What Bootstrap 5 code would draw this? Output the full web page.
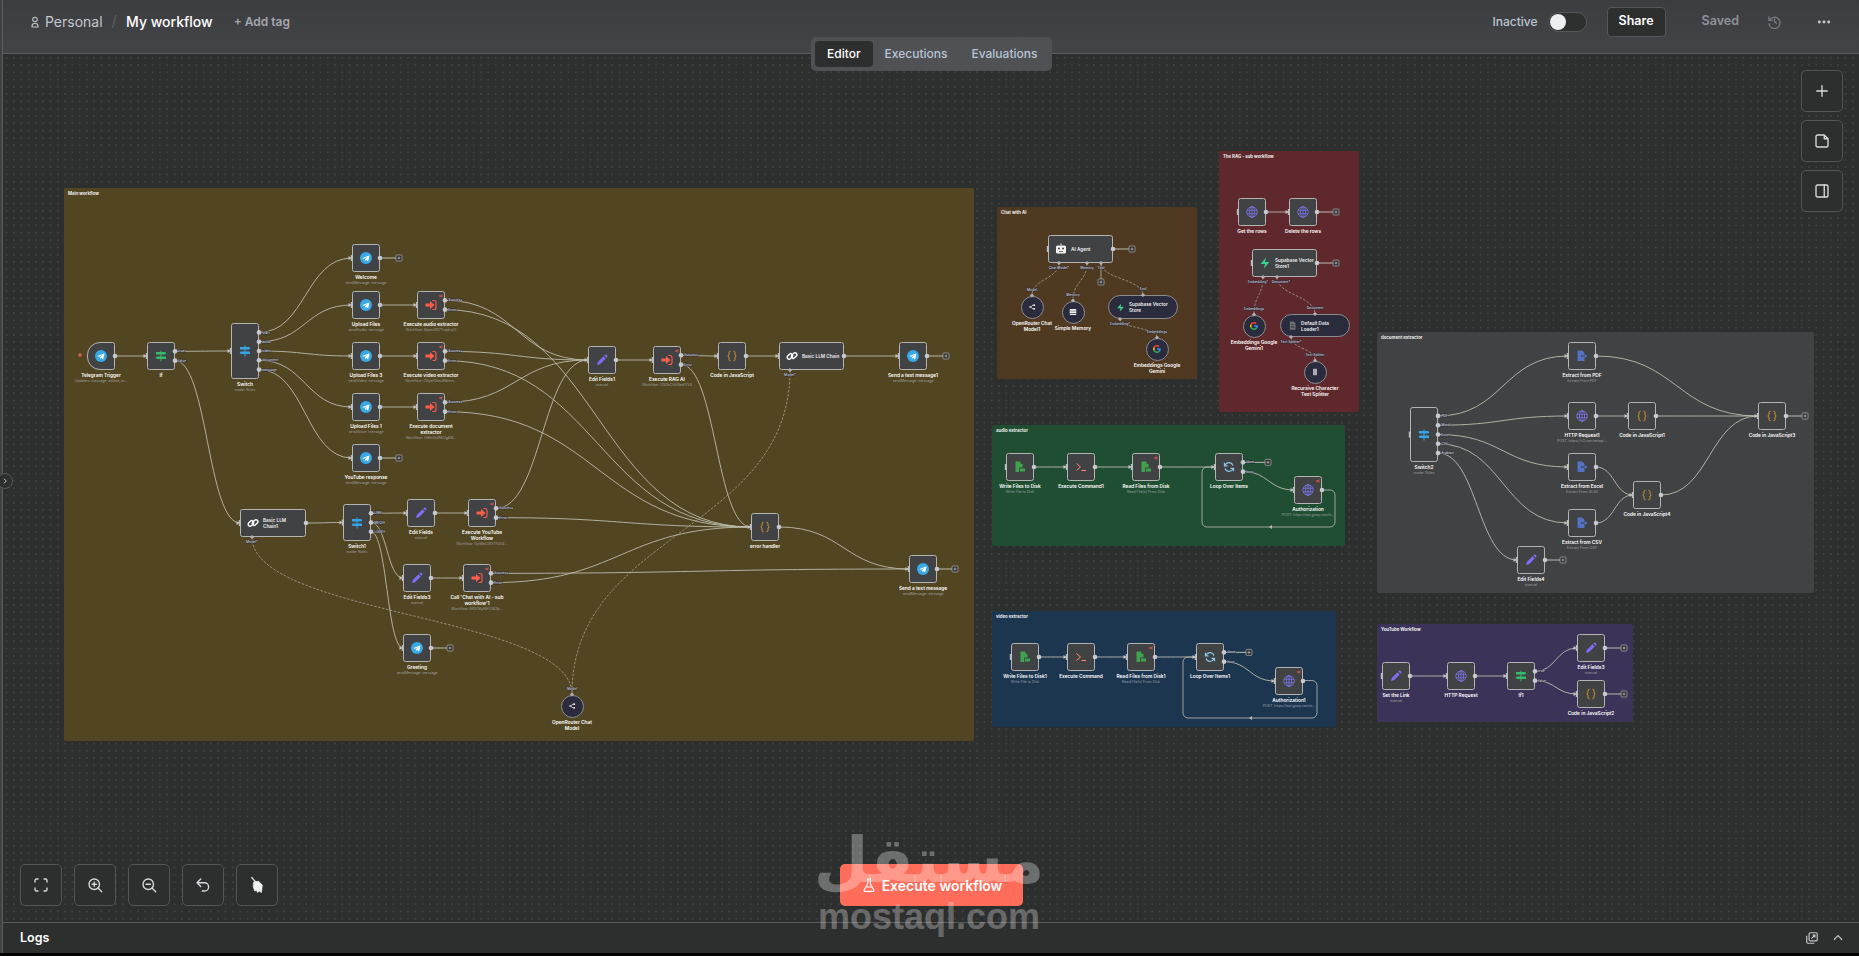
<!doctype html>
<html lang="en">
<head>
<meta charset="utf-8">
<title>My workflow</title>
<link href="https://cdn.jsdelivr.net/npm/bootstrap@5.3.0/dist/css/bootstrap.min.css" rel="stylesheet">
<style>
html,body{height:100%;margin:0;overflow:hidden}
body{background:#000;font-family:Inter,"Liberation Sans",sans-serif;color:#fff}
.app-shell{height:953px}
.side-rail{width:3px;background:#414244;border-right:1px solid #5d5e60}
.top-bar{height:54px;background:linear-gradient(180deg,#3c3d40,#434447);border-bottom:1px solid #5c5d5f;padding:0 27px 10px 26px}
.crumb-muted{font-size:14px;color:#c4c7cd}
.crumb-sep{color:#5f6064;font-size:15px;margin:0 9px}
.crumb-title{font-size:14px;font-weight:500;color:#fff}
.add-tag{font-size:12px;font-weight:600;color:#a4a7af;margin-left:21px}
.state-text{font-size:12px;font-weight:500;color:#bcc4d0}
.toggle-track{width:39px;height:20px;background:#2e2f2f;border:1px solid #57585a;border-radius:10px;margin-left:10px;display:flex;align-items:center;padding-left:1px}
.toggle-knob{width:16px;height:16px;border-radius:50%;background:#eceef2}
.share-btn{width:59px;height:30px;background:#2d2e2e;border:1px solid #55565a;border-radius:4px;font-size:12.5px;font-weight:600;color:#fff;margin-left:20px;padding:0}
.saved-text{font-size:12.5px;font-weight:600;color:#8f939b;margin-left:36px}
.hist-icon{margin-left:28px}
.more-icon{margin-left:34px}
.flow-canvas{background-color:#2d2e2e;background-image:radial-gradient(circle,#484949 .6px,transparent .72px);background-size:7.3px 7.3px;overflow:hidden}
.tab-strip{left:808px;top:37px;height:34px;width:241px;background:#505154;border-radius:5px;padding:4px;z-index:5}
.tab-item{font-size:12px;font-weight:500;color:#b9c4d6;padding:0 12px;line-height:26px;border-radius:4px}
.tab-item.is-on{background:#2d2e2e;color:#fff}
.tool-btn{width:42px;height:42px;background:#2d2e2e;border:1px solid #545557;border-radius:5px;padding:0;display:flex;align-items:center;justify-content:center}
.tool-btn svg{width:18px;height:18px;fill:none;stroke:#d8d9dc;stroke-width:1.8;stroke-linecap:round;stroke-linejoin:round}
.side-tools{right:16px;top:16px;gap:8px;z-index:4}
.zoom-tools{left:17px;bottom:16px;gap:12px;z-index:4}
.run-btn{left:837px;bottom:16px;width:183px;height:42px;background:#ff6d5a;border:0;border-radius:5px;color:#fff;font-size:14px;font-weight:600;gap:5px;z-index:4;padding:0}
.run-btn svg{width:16px;height:16px;fill:none;stroke:#fff;stroke-width:1.7;stroke-linejoin:round}
.log-bar{height:31px;background:#2d2e2e;border-top:1px solid #58595b;padding:0 14px 0 17px;font-size:12.5px;font-weight:600}
.log-gap{margin-left:12px}
.rail-knob{left:-3px;top:473px;width:16px;height:16px;border-radius:50%;background:#2d2e2e;border:1px solid #58595b;z-index:6}
.stamp{position:absolute;left:807px;top:823px;width:244px;text-align:center;z-index:9;color:rgba(255,255,255,.3);pointer-events:none}
.stamp-ar{font-family:"DejaVu Sans",sans-serif;font-weight:700;font-size:63px;line-height:76px;height:76px}
.stamp-en{font-family:"Liberation Sans",sans-serif;font-weight:700;font-size:36px;line-height:36px}
.flow-group{position:absolute;border-radius:2px}
.group-title{position:absolute;left:4px;top:2.5px;font-size:4.3px;font-weight:700;line-height:6px;color:#eee;white-space:nowrap}
.flow-node{position:absolute;background:#414244;border:1px solid #b4b4b4;border-radius:2.5px;display:flex;align-items:center;justify-content:center;gap:4px}
.flow-node svg{flex:none}
.flow-node.is-wide{justify-content:flex-start;padding-left:6px}
.flow-node.is-round{background:#2a2c3d;border-radius:50%;border-color:#8d8d90}
.flow-node.is-pill{background:#2a2c3d;border-radius:13px;justify-content:flex-start;padding-left:7px;border-color:#8d8d90}
.flow-node.is-trigger{border-radius:13px 2.5px 2.5px 13px}
.node-inner{font-size:4.7px;font-weight:600;line-height:6px;color:#f0f0f0;max-width:39px}
.node-cap{position:absolute;width:56px;text-align:center;font-size:4.8px;font-weight:600;line-height:6.2px;color:#fff}
.node-cap.is-narrow{width:50px}
.node-sub{display:flex;justify-content:center;width:100%;font-size:3.6px;font-weight:400;line-height:7.5px;color:#9fa0a0;white-space:nowrap}
.wire-layer{position:absolute;left:0;top:0;pointer-events:none;overflow:visible}
.port-text{font-size:3.4px;font-weight:500;fill:#cfd0d4;paint-order:stroke;stroke:rgba(40,42,60,.75);stroke-width:1px}
.ext-mark{position:absolute;right:1.5px;top:1.5px;width:4px;height:4px}
</style>
</head>
<body>
<svg width="0" height="0" class="position-absolute">
<defs>
<symbol id="i-tg" viewBox="0 0 24 24"><circle cx="12" cy="12" r="12" fill="#37a9e6"/><path fill="#fff" d="M5 12l13-5c.7-.2 1 .1.8 1l-2.200 10c-.1.7-.6.8-1.100.5l-3.400-2.500-1.600 1.500c-.3.300-.8.200-.8-.2l.2-3 5.500-5-7 4.300-3.200-1c-.6-.2-.7-.4-.2-.6z"/></symbol>
<symbol id="i-if" viewBox="0 0 24 24"><path fill="#35b96c" d="M11 1h2v22h-2z"/><path fill="#35b96c" d="M2 4h18l3 2.500-3 2.500H2zM4 13h18v5H4l-3-2.500z"/></symbol>
<symbol id="i-sw" viewBox="0 0 24 24"><path fill="#35a5e8" d="M11 1h2v22h-2z"/><path fill="#35a5e8" d="M2 4h18l3 2.500-3 2.500H2zM4 13h18v5H4l-3-2.500z"/></symbol>
<symbol id="i-ex" viewBox="0 0 24 24"><path fill="#ff5c4a" d="M1 9h9V4l9 8-9 8v-5H1z"/><path fill="none" stroke="#ff5c4a" stroke-width="2.200" d="M15 3h3a4 4 0 0 1 4 4v10a4 4 0 0 1-4 4h-3"/></symbol>
<symbol id="i-pen" viewBox="0 0 24 24"><path fill="#7e6cf2" d="M2 22l1.500-6L15 4.500 19.500 9 8 20.500zM16.500 3l1.500-1.500a2 2 0 0 1 2.800 0l1.700 1.700a2 2 0 0 1 0 2.800L21 7.500z"/></symbol>
<symbol id="i-code" viewBox="0 0 24 24"><path fill="none" stroke="#e59c28" stroke-width="2" d="M9 2.500C6 2.500 6 4.500 6 6.500v2.500c0 2-2.500 3-2.500 3S6 13 6 15v2.500c0 2 0 4 3 4M15 2.500c3 0 3 2 3 4v2.500c0 2 2.500 3 2.500 3S18 13 18 15v2.500c0 2 0 4-3 4"/></symbol>
<symbol id="i-link" viewBox="0 0 24 24"><g fill="none" stroke="#fff" stroke-width="2.800"><rect x="1.500" y="9" width="12.500" height="7.500" rx="3.700" transform="rotate(-45 8 12.800)"/><rect x="10" y="7.500" width="12.500" height="7.500" rx="3.700" transform="rotate(-45 16 11.200)"/></g></symbol>
<symbol id="i-web" viewBox="0 0 24 24"><g fill="none" stroke="#7f78f2" stroke-width="1.500"><circle cx="12" cy="12" r="10.500"/><ellipse cx="12" cy="12" rx="5" ry="10.500"/><path d="M2 8.500h20M2 15.500h20M12 1.500v21"/></g></symbol>
<symbol id="i-file" viewBox="0 0 24 24"><path fill="#3ea34c" d="M3 1h9l5 5.500V13h-7v9H3z"/><path fill="#3ea34c" d="M11.500 15h10.500v6H11.500z"/><path fill="#414244" d="M13 1.500l4 4h-4z"/></symbol>
<symbol id="i-term" viewBox="0 0 24 24"><path fill="none" stroke="#ff8a75" stroke-width="2" d="M3 5l8 7-8 7M13 19h9"/></symbol>
<symbol id="i-loop" viewBox="0 0 24 24"><path fill="none" stroke="#8ec7ea" stroke-width="2.500" d="M20 9A8.500 8.500 0 0 0 5 7L3 9.500M3 3.500v6h6M4 15a8.500 8.500 0 0 0 15 2l2-2.500M21 20.500v-6h-6"/></symbol>
<symbol id="i-pdf" viewBox="0 0 24 24"><path fill="#5572c4" d="M3 1h9l5 5.500V10h-7v4h7v8H3zM13 1.500l4 4h-4z"/><path fill="#5572c4" d="M11 11h7V8.500l5 3.500-5 3.500V13h-7z"/></symbol>
<symbol id="i-bot" viewBox="0 0 24 24"><path fill="#f3f3f3" d="M11 1h2v3h-2zM5 5h14a3 3 0 0 1 3 3v10a3 3 0 0 1-3 3H5a3 3 0 0 1-3-3V8a3 3 0 0 1 3-3z"/><circle cx="8" cy="11" r="2" fill="#414244"/><circle cx="16" cy="11" r="2" fill="#414244"/><path fill="#414244" d="M8 16h8v1.500H8z"/></symbol>
<symbol id="i-or" viewBox="0 0 24 24"><path fill="none" stroke="#fff" stroke-width="2.600" d="M3 12h4c4 0 4-5.500 9-5.500M7 12c4 0 4 5.500 9 5.500"/><circle cx="18.500" cy="6.500" r="2.800" fill="#fff"/><circle cx="18.500" cy="17.500" r="2.800" fill="#fff"/></symbol>
<symbol id="i-db" viewBox="0 0 24 24"><path fill="#f0f0f0" d="M4 3h16a2 2 0 0 1 2 2v3H2V5a2 2 0 0 1 2-2zM2 10h20v5H2zM2 17h20v2a2 2 0 0 1-2 2H4a2 2 0 0 1-2-2z"/></symbol>
<symbol id="i-bolt" viewBox="0 0 24 24"><path fill="#3ecf8e" d="M14 1L3 14h9l-2 9 11-13h-9z"/></symbol>
<symbol id="i-g" viewBox="0 0 48 48"><path fill="#EA4335" d="M24 9.500c3.500 0 6.700 1.200 9.200 3.600l6.900-6.900C35.900 2.400 30.500 0 24 0 14.600 0 6.500 5.400 2.600 13.200l8 6.200C12.400 13.700 17.700 9.500 24 9.500z"/><path fill="#4285F4" d="M47 24.500c0-1.600-.1-3.100-.4-4.500H24v9h12.900c-.6 3-2.200 5.500-4.800 7.200l7.700 6c4.500-4.200 7.200-10.300 7.200-17.700z"/><path fill="#FBBC05" d="M10.600 28.600c-.5-1.400-.8-3-.8-4.600s.3-3.200.8-4.600l-8-6.200C.9 16.500 0 20.100 0 24s.9 7.500 2.600 10.800z"/><path fill="#34A853" d="M24 48c6.500 0 11.900-2.100 15.900-5.800l-7.700-6c-2.200 1.500-5 2.300-8.200 2.300-6.300 0-11.600-4.200-13.500-9.900l-8 6.200C6.500 42.600 14.600 48 24 48z"/></symbol>
<symbol id="i-load" viewBox="0 0 24 24"><path fill="#6c6e72" d="M5 1h10l5 5v17H5z"/><path fill="#2a2c3d" d="M8 9h9v1.500H8zM8 13h9v1.500H8zM8 17h9v1.500H8z"/></symbol>
<symbol id="i-split" viewBox="0 0 24 24"><path fill="#e8e8ec" d="M7 2h4v20H7zM13 2h4v20h-4z"/></symbol>
</defs>
</svg>

<div class="app-shell d-flex position-relative">
  <div class="side-rail flex-shrink-0"></div>
  <main class="flex-grow-1 d-flex flex-column position-relative">
    <header class="top-bar d-flex align-items-center flex-shrink-0">
      <svg width="12" height="12" viewBox="0 0 24 24" fill="none" stroke="#c4c7cd" stroke-width="2.200" class="me-1"><circle cx="12" cy="7" r="4.500"/><path d="M6 22v-2a5 5 0 0 1 5-5h2a5 5 0 0 1 5 5v2z"/></svg>
      <span class="crumb-muted">Personal</span><span class="crumb-sep">/</span><span class="crumb-title">My workflow</span><span class="add-tag">+ Add tag</span>
      <div class="ms-auto d-flex align-items-center">
        <span class="state-text">Inactive</span>
        <span class="toggle-track"><span class="toggle-knob"></span></span>
        <button class="btn share-btn" type="button">Share</button>
        <span class="saved-text">Saved</span>
        <svg width="15" height="15" viewBox="0 0 24 24" fill="none" stroke="#777a80" stroke-width="2" class="hist-icon"><path d="M3 4v6h6M4 10a9 9 0 1 1-1 5M12 7v6l4 2"/></svg>
        <svg width="16" height="16" viewBox="0 0 24 24" fill="#c8cace" class="more-icon"><circle cx="5" cy="12" r="2.200"/><circle cx="12" cy="12" r="2.200"/><circle cx="19" cy="12" r="2.200"/></svg>
      </div>
    </header>
    <div class="flow-canvas flex-grow-1 position-relative" id="canvas">
      <div class="position-absolute d-flex flex-column side-tools">
        <button class="btn tool-btn" type="button"><svg viewBox="0 0 24 24"><path d="M12 5v14M5 12h14"/></svg></button>
        <button class="btn tool-btn" type="button"><svg viewBox="0 0 24 24"><path d="M6 4h9l5 5v9a2 2 0 0 1-2 2H6a2 2 0 0 1-2-2V6a2 2 0 0 1 2-2zM15 4v5h5"/></svg></button>
        <button class="btn tool-btn" type="button"><svg viewBox="0 0 24 24"><rect x="4" y="4" width="16" height="16" rx="2"/><path d="M15 4v16"/></svg></button>
      </div>
      <div class="position-absolute d-flex zoom-tools">
        <button class="btn tool-btn" type="button"><svg viewBox="0 0 24 24"><path d="M4 8V6a2 2 0 0 1 2-2h2M16 4h2a2 2 0 0 1 2 2v2M20 16v2a2 2 0 0 1-2 2h-2M8 20H6a2 2 0 0 1-2-2v-2"/></svg></button>
        <button class="btn tool-btn" type="button"><svg viewBox="0 0 24 24"><circle cx="11" cy="11" r="7"/><path d="M21 21l-5-5M11 8v6M8 11h6"/></svg></button>
        <button class="btn tool-btn" type="button"><svg viewBox="0 0 24 24"><circle cx="11" cy="11" r="7"/><path d="M21 21l-5-5M8 11h6"/></svg></button>
        <button class="btn tool-btn" type="button"><svg viewBox="0 0 24 24"><path d="M9 14L4 9l5-5M4 9h10a5.500 5.500 0 0 1 0 11h-3"/></svg></button>
        <button class="btn tool-btn" type="button"><svg viewBox="0 0 24 24"><path d="M5 2l6 7"/><path fill="#f2f2f2" stroke="#f2f2f2" stroke-width="1" d="M8 8l6-1 5 5-1 10-3-2-2 2-2-3-2 1-2-6z"/></svg></button>
      </div>
      <button class="btn position-absolute d-flex align-items-center justify-content-center run-btn" type="button"><svg viewBox="0 0 24 24"><path d="M9 3h6M10 3v7L4.500 20a1 1 0 0 0 1 1.500h13a1 1 0 0 0 1-1.500L14 10V3M7.500 15h9"/></svg>Execute workflow</button>
    </div>
    <footer class="log-bar d-flex align-items-center flex-shrink-0">
      <span>Logs</span>
      <svg width="14" height="14" viewBox="0 0 24 24" fill="none" stroke="#c4c6cb" stroke-width="2" class="ms-auto"><rect x="7" y="3" width="14" height="14" rx="2"/><path d="M3 8v11a2 2 0 0 0 2 2h11M11 13l6-6M13 7h4v4"/></svg>
      <svg width="14" height="14" viewBox="0 0 24 24" fill="none" stroke="#c4c6cb" stroke-width="2" class="log-gap"><path d="M5 15l7-7 7 7"/></svg>
    </footer>
    <div class="position-absolute d-flex tab-strip">
      <span class="tab-item is-on">Editor</span><span class="tab-item">Executions</span><span class="tab-item">Evaluations</span>
    </div>
  </main>
  <div class="position-absolute rail-knob d-flex align-items-center justify-content-center">
    <svg width="8" height="8" viewBox="0 0 24 24" fill="none" stroke="#c4c6cb" stroke-width="3"><path d="M9 5l7 7-7 7"/></svg>
  </div>
  <div class="stamp"><div class="stamp-ar" lang="ar" dir="rtl">مستقل</div><div class="stamp-en">mostaql.com</div></div>
</div>

<script src="https://cdn.jsdelivr.net/npm/bootstrap@5.3.0/dist/js/bootstrap.bundle.min.js"></script>
<script>
const OX=3,OY=54,canvas=document.getElementById('canvas'),NS='http://www.w3.org/2000/svg';
const groups=[
 ['Main workflow',64,188,910,553,'#524521'],
 ['Chat with AI',997,207,200,172,'#4f3a21'],
 ['The RAG - sub workflow',1219,151,140,261,'#5f282c'],
 ['audio extractor',992,425,353,121,'#1f4e33'],
 ['video extractor',992,611,344,116,'#1d3650'],
 ['document extractor',1377,332,437,261,'#414244'],
 ['YouTube Workflow',1377,624,256,98,'#3c3358']];
const N={};
function n(id,ic,x,y,label,sub,o){N[id]=Object.assign({id,ic,x,y,w:28,h:28,label,sub,outs:1},o||{});}
const msg='sendMessage: message';
n('trig','tg',87,342,'Telegram Trigger','Updates: message, edited_m...',{trigger:1});
n('if','if',147,342,'If','',{outs:2});
n('sw','sw',231,323,'Switch','mode: Rules',{h:56,outs:5,ol:['start','audio','video','document','message']});
n('wel','tg',352,244,'Welcome',msg);
n('up','tg',352,291,'Upload Files','sendAudio: message');
n('up3','tg',352,342,'Upload Files 3','sendVideo: message');
n('up1','tg',352,393,'Upload Files 1','sendVoice: message');
n('yt','tg',352,444,'YouTube response',msg);
const S=['Success','Error'];
n('exA','ex',417,291,'Execute audio extractor','Workflow: 8qonrRD7TvqdryI3',{outs:2,ol:S,ext:1});
n('exV','ex',417,342,'Execute video extractor','Workflow: O0yeiOSauRBnnn...',{outs:2,ol:S,ext:1});
n('exD','ex',417,393,'Execute document extractor','Workflow: O8ks7qSMClgBN...',{outs:2,ol:S,ext:1});
n('ef1','pen',588,346,'Edit Fields1','manual');
n('rag','ex',653,346,'Execute RAG AI','Workflow: O0ZbCHU8edlYV8',{outs:2,ol:S,ext:1});
n('js','code',718,342,'Code in JavaScript','');
n('llm','link',779,342,'Basic LLM Chain','',{w:65,wide:1,bp:[[11,'Model*']]});
n('send1','tg',899,342,'Send a text message1',msg);
n('err','code',751,513,'error handler','');
n('send','tg',909,555,'Send a text message',msg);
n('llm1','link',240,509,'Basic LLM Chain1','',{w:66,wide:1,bp:[[12,'Model*']]});
n('sw1','sw',343,504,'Switch1','mode: Rules',{h:37,outs:3,ol:['LINK','MEDIA','LOBBY']});
n('ef','pen',407,499,'Edit Fields','manual');
n('exY','ex',468,499,'Execute YouTube Workflow','Workflow: DyMeLDE5T7Uh2...',{outs:2,ol:S,ext:1});
n('ef3','pen',403,564,'Edit Fields3','manual');
n('call','ex',463,564,"Call 'Chat with AI - sub workflow'1",'Workflow: 8R2GKyNAY3B2b...',{outs:2,ol:S,ext:1});
n('greet','tg',403,634,'Greeting',msg);
n('or','or',560.500,694.500,'OpenRouter Chat Model','',{w:23,h:23,round:1,tl:'Model'});
n('ai','bot',1048,235,'AI Agent','',{w:65,wide:1,bp:[[11,'Chat Model*'],[39,'Memory'],[53,'Tool']]});
n('or1','or',1020.500,295.500,'OpenRouter Chat Model1','',{w:23,h:23,round:1,tl:'Model'});
n('mem','db',1061.500,300.500,'Simple Memory','',{w:23,h:23,round:1,tl:'Memory'});
n('sup','bolt',1108,295,'Supabase Vector Store','',{w:70,h:24,pill:1,tl:'Tool',tlx:35,bp:[[12,'Embedding*']]});
n('emb','g',1145.500,337.500,'Embeddings Google Gemini','',{w:23,h:23,round:1,tl:'Embeddings'});
n('get','web',1238,198,'Get the rows','');
n('del','web',1289,198,'Delete the rows','');
n('sup1','bolt',1252,249,'Supabase Vector Store1','',{w:65,wide:1,bp:[[11,'Embedding*',-5],[25,'Document*',4]]});
n('emb1','g',1242.500,314.500,'Embeddings Google Gemini1','',{w:23,h:23,round:1,tl:'Embeddings'});
n('dl','load',1280,314,'Default Data Loader1','',{w:70,h:23,pill:1,tl:'Document',tlx:35,bp:[[11,'Text Splitter*']]});
n('rec','split',1303.500,360.500,'Recursive Character Text Splitter','',{w:23,h:23,round:1,tl:'Text Splitter'});
const wf='Write File to Disk',rf='Read File(s) From Disk',gq='POST: https://api.groq.com/o...';
n('w1','file',1006,453,'Write Files to Disk',wf);
n('c1','term',1067,453,'Execute Command1','');
n('r1','file',1132,453,'Read Files from Disk',rf,{ext:1});
n('l1','loop',1215,453,'Loop Over Items','',{outs:2,ol:['done','loop']});
n('a1','web',1294,476,'Authorization',gq,{ext:1});
n('w2','file',1011,643,'Write Files to Disk1',wf);
n('c2','term',1067,643,'Execute Command','');
n('r2','file',1127,643,'Read Files from Disk1',rf,{ext:1});
n('l2','loop',1196,643,'Loop Over Items1','',{outs:2,ol:['done','loop']});
n('a2','web',1275,667,'Authorization1',gq,{ext:1});
n('sw2','sw',1410,407,'Switch2','mode: Rules',{h:55,outs:5,ol:['PDF','Word','Excel','CSV','Arabian']});
n('pdf','pdf',1568,342,'Extract from PDF','Extract From PDF');
n('h1','web',1568,402,'HTTP Request1','POST: https://v2.convertapi...');
n('j1','code',1628,402,'Code in JavaScript1','');
n('j3','code',1758,402,'Code in JavaScript3','');
n('xl','pdf',1568,453,'Extract from Excel','Extract From XLSX');
n('csv','pdf',1568,509,'Extract from CSV','Extract From CSV');
n('j4','code',1633,481,'Code in JavaScript4','');
n('ef4','pen',1517,546,'Edit Fields4','manual');
n('set','pen',1382,662,'Set the Link','manual');
n('h2','web',1447,662,'HTTP Request','');
n('if1','if',1507,662,'If1','',{outs:2,ol:['true','false']});
n('ef5','pen',1577,634,'Edit Fields3','manual');
n('j2','code',1577,680,'Code in JavaScript2','');
N.if.ol=['true','false'];

function el(tag,cls,txt){const e=document.createElement(tag);if(cls)e.className=cls;if(txt!=null)e.textContent=txt;return e;}
function box(e,x,y,w,h){e.style.left=(x-OX)+'px';e.style.top=(y-OY)+'px';if(w!=null)e.style.width=w+'px';if(h!=null)e.style.height=h+'px';}
function icon(name,s){const v=document.createElementNS(NS,'svg');v.setAttribute('width',s);v.setAttribute('height',s);const u=document.createElementNS(NS,'use');u.setAttribute('href','#i-'+name);v.appendChild(u);return v;}
groups.forEach(g=>{const d=el('div','flow-group');box(d,g[1],g[2],g[3],g[4]);d.style.background=g[5];d.appendChild(el('div','group-title',g[0]));canvas.appendChild(d);});
Object.values(N).forEach(o=>{
  const d=el('div','flow-node'+(o.wide?' is-wide':'')+(o.round?' is-round':'')+(o.pill?' is-pill':'')+(o.trigger?' is-trigger':''));
  box(d,o.x,o.y,o.w,o.h);
  const sz=o.round?8:o.pill?9:12;
  d.appendChild(icon(o.ic,sz));
  if(o.wide||o.pill){d.appendChild(el('span','node-inner',o.label));}
  if(o.ext){const m=icon('ex',4);m.setAttribute('class','ext-mark');d.appendChild(m);}
  canvas.appendChild(d);
  if(!o.wide&&!o.pill){
    const c=el('div','node-cap'+(o.round?' is-narrow':''));c.appendChild(document.createTextNode(o.label));
    if(o.sub)c.appendChild(el('span','node-sub',o.sub));
    box(c,o.x+o.w/2-(o.round?25:28),o.y+o.h+1.500);
    canvas.appendChild(c);
  }
});
function outP(o,i){return [o.x+o.w,o.y+o.h/2+(i-(o.outs-1)/2)*9.300];}
function inP(o){return [o.x,o.y+o.h/2];}
const svg=document.createElementNS(NS,'svg');svg.setAttribute('class','wire-layer');svg.setAttribute('width',1856);svg.setAttribute('height',900);svg.setAttribute('viewBox',OX+' '+OY+' 1856 900');
function add(t,a,txt){const e=document.createElementNS(NS,t);for(const k in a)e.setAttribute(k,a[k]);if(txt)e.textContent=txt;svg.appendChild(e);return e;}
const W='#bcbbae',hasIn=new Set(['l1','l2']);
function wire(a,i,b){hasIn.add(b);const p=outP(N[a],i),q=inP(N[b]);const dx=Math.max((q[0]-p[0])/2,8);
  add('path',{d:`M${p} C${p[0]+dx} ${p[1]},${q[0]-dx} ${q[1]},${q}`,fill:'none',stroke:W,'stroke-width':.9});}
function dash(x1,y1,x2,y2){const c=Math.abs(y2-y1)/2;add('path',{d:`M${x1} ${y1} C${x1} ${y1+c},${x2} ${y2-c},${x2} ${y2}`,fill:'none',stroke:'#b2b2a6','stroke-width':.7,'stroke-dasharray':'2.500 1.500'});}
function stub(a,i,x){const p=outP(N[a],i);add('path',{d:`M${p} H${x-3}`,stroke:W,'stroke-width':1,fill:'none'});
  add('rect',{x:x-3,y:p[1]-3,width:6,height:6,rx:1,fill:'#2f3034',stroke:'#b0b0b0','stroke-width':.7});
  add('path',{d:`M${x-1.500} ${p[1]}h3M${x} ${p[1]-1.500}v3`,stroke:'#ddd','stroke-width':.6});}
[['trig',0,'if'],['if',0,'sw'],['if',1,'llm1'],['sw',0,'wel'],['sw',1,'up'],['sw',2,'up3'],['sw',3,'up1'],['sw',4,'yt'],
 ['up',0,'exA'],['up3',0,'exV'],['up1',0,'exD'],['exA',0,'ef1'],['exA',1,'err'],['exV',0,'ef1'],['exV',1,'err'],['exD',0,'ef1'],['exD',1,'err'],
 ['exY',0,'ef1'],['exY',1,'err'],['call',0,'send'],['call',1,'err'],['ef1',0,'rag'],['rag',0,'js'],['rag',1,'err'],['js',0,'llm'],['llm',0,'send1'],['err',0,'send'],
 ['llm1',0,'sw1'],['sw1',0,'ef'],['sw1',1,'ef3'],['sw1',2,'greet'],['ef',0,'exY'],['ef3',0,'call'],
 ['get',0,'del'],['w1',0,'c1'],['c1',0,'r1'],['r1',0,'l1'],['l1',1,'a1'],['w2',0,'c2'],['c2',0,'r2'],['r2',0,'l2'],['l2',1,'a2'],
 ['sw2',0,'pdf'],['sw2',1,'h1'],['sw2',2,'xl'],['sw2',3,'csv'],['sw2',4,'ef4'],['pdf',0,'j3'],['h1',0,'j1'],['j1',0,'j3'],['xl',0,'j4'],['csv',0,'j4'],['j4',0,'j3'],
 ['set',0,'h2'],['h2',0,'if1'],['if1',0,'ef5'],['if1',1,'j2']].forEach(e=>wire(e[0],e[1],e[2]));
[['wel',0,399],['yt',0,399],['send1',0,946],['send',0,955],['greet',0,450],['ai',0,1132],['del',0,1336],['sup1',0,1336],['l1',0,1268],['l2',0,1249],['ef4',0,1563],['j3',0,1805],['ef5',0,1624],['j2',0,1624]].forEach(s=>stub(s[0],s[1],s[2]));
dash(252,537,572,694);dash(790,370,572,694);
dash(1059,263,1032,295);dash(1087,263,1073,300);dash(1101,263,1143,295);dash(1120,319,1157,337);
dash(1263,277,1254,314);dash(1277,277,1315,314);dash(1291,337,1315,360);
add('path',{d:'M1101 263V279',stroke:W,'stroke-width':.8,fill:'none'});
add('rect',{x:1098,y:279,width:6,height:6,rx:1,fill:'#2f3034',stroke:'#b0b0b0','stroke-width':.7});
add('path',{d:'M1099.500 282h3M1101 280.500v3',stroke:'#ddd','stroke-width':.6});
add('path',{d:'M1322 490H1330a5 5 0 0 1 5 5V522a5 5 0 0 1-5 5H1207a5 5 0 0 1-5-5V472a5 5 0 0 1 5-5H1215',fill:'none',stroke:W,'stroke-width':.8});
add('path',{d:'M1303 680.500H1312a5 5 0 0 1 5 5V713a5 5 0 0 1-5 5H1188a5 5 0 0 1-5-5V662a5 5 0 0 1 5-5H1196',fill:'none',stroke:W,'stroke-width':.8});
add('path',{d:'M1272 525l-3 2 3 2zM1252 716l-3 2 3 2z',fill:W});
Object.values(N).forEach(o=>{
  if(!o.round&&!o.pill){for(let i=0;i<o.outs;i++){const p=outP(o,i);add('circle',{cx:p[0],cy:p[1],r:2.300,fill:'#c6c9d0'});
    if(o.ol)add('text',{x:p[0]+3.200,y:p[1]+1.100,class:'port-text'},o.ol[i]);}}
  if(!o.trigger&&!o.round&&!o.pill){const q=inP(o);add('rect',{x:q[0]-1.200,y:q[1]-3,width:2.200,height:6,fill:'#b9bcc2'});if(hasIn.has(o.id))add('path',{d:`M${q[0]-3.500} ${q[1]-2}l3 2-3 2z`,fill:'#c4c4bc'});}
  (o.bp||[]).forEach(b=>{const x=o.x+b[0],y=o.y+o.h;add('rect',{x:x-1.500,y:y-1.500,width:3,height:3,fill:'#aeb0b8',transform:`rotate(45 ${x} ${y})`});add('text',{x:x+(b[2]||0),y:y+6,'text-anchor':'middle',class:'port-text'},b[1]);});
  if(o.tl){const x=o.x+(o.tlx||o.w/2),y=o.y;add('rect',{x:x-1.500,y:y-1.500,width:3,height:3,fill:'#aeb0b8',transform:`rotate(45 ${x} ${y})`});add('text',{x:x,y:y-5,'text-anchor':'middle',class:'port-text'},o.tl);}
});
add('path',{d:'M78 355h4M80 353v4',stroke:'#ff6d5a','stroke-width':1});
canvas.appendChild(svg);
</script>
</body>
</html>
